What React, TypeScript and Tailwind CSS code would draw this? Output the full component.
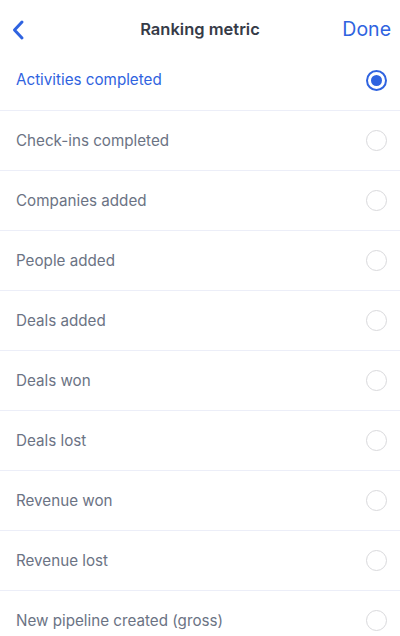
import React, { useState } from 'react';

const metrics = [
  'Activities completed',
  'Check-ins completed',
  'Companies added',
  'People added',
  'Deals added',
  'Deals won',
  'Deals lost',
  'Revenue won',
  'Revenue lost',
  'New pipeline created (gross)',
];

export default function App() {
  const [selected, setSelected] = useState(0);

  return (
    <div className="w-[400px] h-[636px] bg-white overflow-hidden" style={{ fontFamily: 'Inter, "Noto Sans", sans-serif' }}>
      {/* Header */}
      <header className="relative h-[59px] flex items-center justify-between pl-[11px] pr-[9px]">
        <button className="text-[#2f63e0] w-[20px] h-[24px] flex items-center">
          <svg width="14" height="22" viewBox="0 0 14 22" fill="none">
            <path d="M11 3L3.5 11L11 19" stroke="currentColor" strokeWidth="3" strokeLinecap="round" strokeLinejoin="round" />
          </svg>
        </button>
        <h1 className="absolute left-0 right-0 text-center text-[16.5px] font-semibold text-[#363b47] pointer-events-none">
          Ranking metric
        </h1>
        <button className="text-[19.5px] text-[#2f63e0]">Done</button>
      </header>

      {/* List */}
      <ul className="-mt-[9px]">
        {metrics.map((m, i) => {
          const active = i === selected;
          return (
            <li
              key={m}
              onClick={() => setSelected(i)}
              className={`h-[60px] flex items-center justify-between pl-[16px] pr-[13px] ${i > 0 ? 'border-t border-[#eceef8]' : ''}`}
            >
              <span className={`text-[15.2px] pt-[1px] ${active ? 'text-[#2f63e0]' : 'text-[#6b7384]'}`}>{m}</span>
              {active ? (
                <span className="w-[21px] h-[21px] rounded-full border-2 border-[#2f63e0] flex items-center justify-center">
                  <span className="w-[11px] h-[11px] rounded-full bg-[#2f63e0]" />
                </span>
              ) : (
                <span className="w-[21px] h-[21px] rounded-full border border-[#d9d9dc]" />
              )}
            </li>
          );
        })}
      </ul>
    </div>
  );
}
